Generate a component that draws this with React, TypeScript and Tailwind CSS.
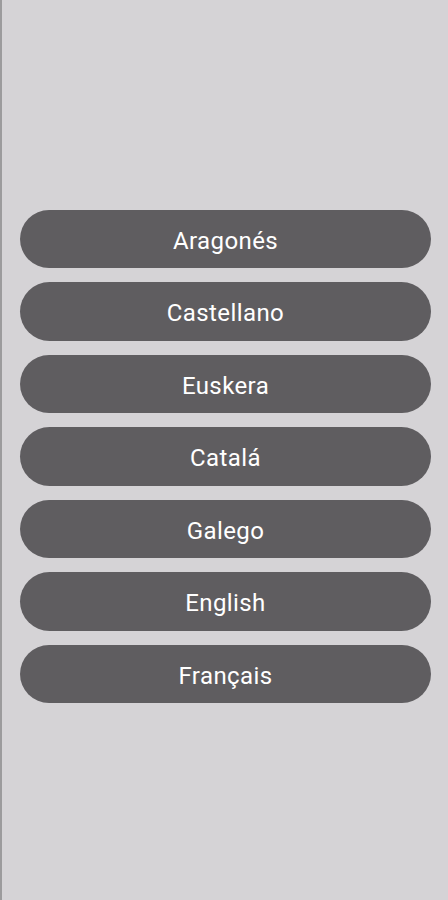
const languages = ["Aragonés", "Castellano", "Euskera", "Catalá", "Galego", "English", "Français"];

export default function App() {
  return (
    <div className="min-h-[900px] w-full bg-[#d5d3d6] border-l-2 border-[#9c9b9d] flex flex-col justify-center pl-[18px] pr-[17px] pt-[13px]">
      <div className="flex flex-col gap-[14px]">
        {languages.map((lang) => (
          <button
            key={lang}
            className="h-[58.5px] w-full rounded-full bg-[#5f5d60] text-white text-[24px] tracking-[0.4px] pt-[3px] font-['Roboto',sans-serif]"
          >
            {lang}
          </button>
        ))}
      </div>
    </div>
  );
}
